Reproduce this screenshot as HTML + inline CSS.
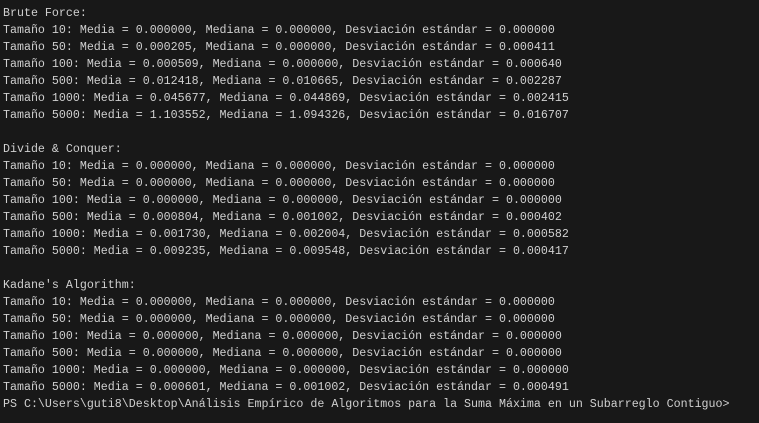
<!DOCTYPE html>
<html><head><meta charset="utf-8"><style>
html,body{margin:0;padding:0;background:#181818;width:759px;height:423px;overflow:hidden}
pre{margin:0;position:absolute;left:3px;top:5px;font-family:"Liberation Mono",monospace;font-size:11.65px;line-height:17px;color:#d0d0d0;white-space:pre}
</style></head><body><pre>Brute Force:
Tamaño 10: Media = 0.000000, Mediana = 0.000000, Desviación estándar = 0.000000
Tamaño 50: Media = 0.000205, Mediana = 0.000000, Desviación estándar = 0.000411
Tamaño 100: Media = 0.000509, Mediana = 0.000000, Desviación estándar = 0.000640
Tamaño 500: Media = 0.012418, Mediana = 0.010665, Desviación estándar = 0.002287
Tamaño 1000: Media = 0.045677, Mediana = 0.044869, Desviación estándar = 0.002415
Tamaño 5000: Media = 1.103552, Mediana = 1.094326, Desviación estándar = 0.016707

Divide &amp; Conquer:
Tamaño 10: Media = 0.000000, Mediana = 0.000000, Desviación estándar = 0.000000
Tamaño 50: Media = 0.000000, Mediana = 0.000000, Desviación estándar = 0.000000
Tamaño 100: Media = 0.000000, Mediana = 0.000000, Desviación estándar = 0.000000
Tamaño 500: Media = 0.000804, Mediana = 0.001002, Desviación estándar = 0.000402
Tamaño 1000: Media = 0.001730, Mediana = 0.002004, Desviación estándar = 0.000582
Tamaño 5000: Media = 0.009235, Mediana = 0.009548, Desviación estándar = 0.000417

Kadane's Algorithm:
Tamaño 10: Media = 0.000000, Mediana = 0.000000, Desviación estándar = 0.000000
Tamaño 50: Media = 0.000000, Mediana = 0.000000, Desviación estándar = 0.000000
Tamaño 100: Media = 0.000000, Mediana = 0.000000, Desviación estándar = 0.000000
Tamaño 500: Media = 0.000000, Mediana = 0.000000, Desviación estándar = 0.000000
Tamaño 1000: Media = 0.000000, Mediana = 0.000000, Desviación estándar = 0.000000
Tamaño 5000: Media = 0.000601, Mediana = 0.001002, Desviación estándar = 0.000491
PS C:\Users\guti8\Desktop\Análisis Empírico de Algoritmos para la Suma Máxima en un Subarreglo Contiguo&gt;</pre></body></html>
